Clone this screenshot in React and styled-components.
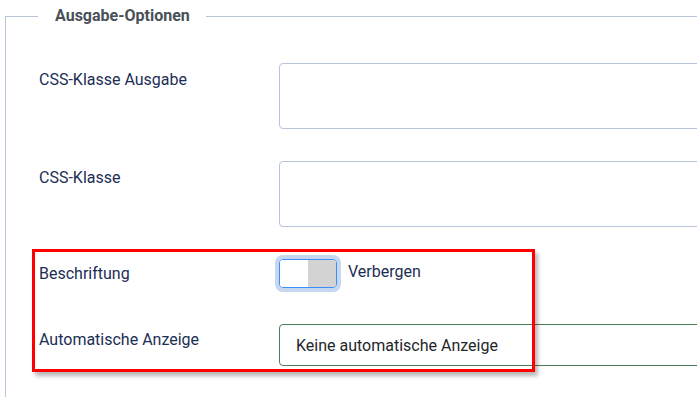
import React from 'react';
import styled, { createGlobalStyle } from 'styled-components';

const GlobalStyle = createGlobalStyle`
  html, body {
    margin: 0;
    padding: 0;
    background: #fff;
    overflow: hidden;
  }
  body {
    font-family: Roboto, "Liberation Sans", sans-serif;
  }
`;

const Page = styled.div`
  position: relative;
  width: 697px;
  height: 397px;
  overflow: hidden;
`;

const Fieldset = styled.fieldset`
  margin: 6px 0 0 5px;
  width: 900px;
  padding: 37px 0 80px 32px;
  border: 1px solid #b9c6da;
  border-right: none;
  border-radius: 0;
`;

const Legend = styled.legend`
  padding: 0 16px 0 17px;
  font-size: 16px;
  line-height: 20px;
  font-weight: 700;
  color: #495057;
`;

const Row = styled.div`
  display: flex;
  align-items: flex-start;
  min-height: ${p => p.$min || 0}px;
  margin-bottom: 32px;
`;

const Label = styled.label`
  width: 240px;
  flex: none;
  padding-top: ${p => p.$pt ?? 5}px;
  padding-left: 1px;
  font-size: 16px;
  line-height: 24px;
  color: #1b2e55;
`;

const TextArea = styled.textarea`
  width: 520px;
  height: 66px;
  box-sizing: border-box;
  border: 1px solid #b6c4d9;
  border-radius: 4px;
  resize: none;
  font-family: inherit;
  margin: 0;
`;

const SwitchWrap = styled.div`
  display: flex;
  align-items: center;
  gap: 11px;
`;

const Switch = styled.span`
  display: flex;
  width: 58px;
  height: 29px;
  box-sizing: border-box;
  border: 1px solid #3d8efa;
  border-radius: 4px;
  overflow: hidden;
  box-shadow: 0 0 0 4px #c6d8f0;
`;

const Half = styled.span`
  flex: 1;
  background: ${p => p.$bg};
`;

const SwitchText = styled.span`
  font-size: 16px;
  line-height: 24px;
  color: #1b2e55;
  margin-top: -3px;
`;

const Select = styled.div`
  width: 520px;
  height: 42px;
  box-sizing: border-box;
  border: 1px solid #4a7d55;
  border-radius: 4px;
  padding: 0 16px;
  display: flex;
  align-items: center;
  font-size: 16px;
  color: #22262a;
`;

const Highlight = styled.div`
  position: absolute;
  left: 32px;
  top: 249px;
  width: 503px;
  height: 123px;
  box-sizing: border-box;
  border: 3px solid #ff0000;
  box-shadow: 3px 4px 4px rgba(0, 0, 0, 0.28);
  pointer-events: none;
`;

export default function App() {
  return (
    <Page>
      <GlobalStyle />
      <Fieldset>
        <Legend>Ausgabe-Optionen</Legend>
        <Row>
          <Label>CSS-Klasse Ausgabe</Label>
          <TextArea />
        </Row>
        <Row>
          <Label>CSS-Klasse</Label>
          <TextArea />
        </Row>
        <Row $min={33}>
          <Label $pt={3}>Beschriftung</Label>
          <SwitchWrap>
            <Switch>
              <Half $bg="#ffffff" />
              <Half $bg="#d3d3d3" />
            </Switch>
            <SwitchText>Verbergen</SwitchText>
          </SwitchWrap>
        </Row>
        <Row>
          <Label $pt={4}>Automatische Anzeige</Label>
          <Select>Keine automatische Anzeige</Select>
        </Row>
      </Fieldset>
      <Highlight />
    </Page>
  );
}
